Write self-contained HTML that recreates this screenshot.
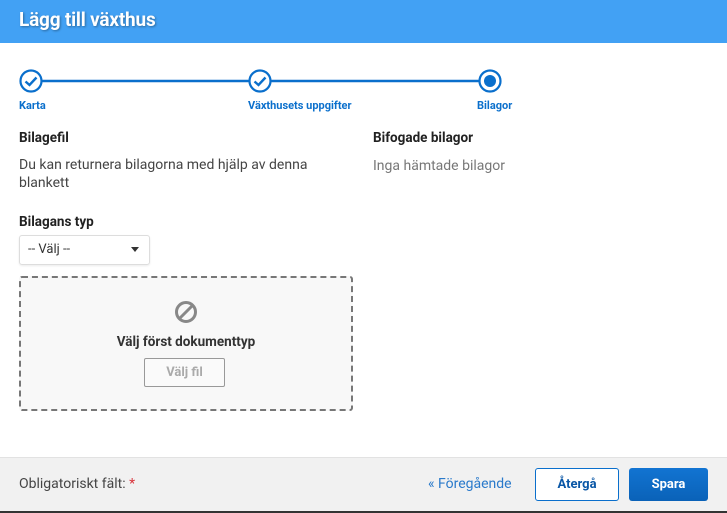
<!DOCTYPE html>
<html><head><meta charset="utf-8"><style>
*{margin:0;padding:0;box-sizing:border-box}
body{width:727px;height:513px;overflow:hidden;background:#fff;font-family:"Roboto","Liberation Sans",sans-serif;position:relative;color:#222}
.a{position:absolute;white-space:nowrap}
.hdr{position:absolute;left:0;top:0;width:727px;height:43px;background:#42a1f4}
.hdr span{position:absolute;left:19px;top:8px;font-size:19px;font-weight:bold;color:#fff;text-shadow:1px 1px 2px rgba(0,0,0,.35);letter-spacing:-0.2px}
.lbl{font-size:11px;font-weight:bold;color:#0a6fcc;top:99px}
.h{font-size:13.5px;font-weight:bold;color:#222}
.p{font-size:14px;color:#444;line-height:18px}
.sel{left:19px;top:235px;width:131px;height:30px;border:1px solid #ddd;border-radius:3px;box-shadow:0 1px 2px rgba(0,0,0,.08);font-size:13px;color:#333;padding:6px 0 0 8px}
.drop{left:19px;top:276px;width:334px;height:135px;background:#f8f8f8;border:2px dashed #777;border-radius:3px}
.btnf{left:144px;top:358px;width:81px;height:29px;border:1px solid #999;border-radius:2px;font-size:13px;font-weight:bold;color:#aaa;text-align:center;line-height:27px;background:#fafafa}
.ftr{position:absolute;left:0;top:457px;width:727px;height:54px;background:#f1f1f1;border-top:1px solid #e2e2e2}
</style></head><body>
<div class="hdr"><span>Lägg till växthus</span></div>
<svg class="a" style="left:0;top:60px" width="727" height="40">
<line x1="42" y1="21" x2="249" y2="21" stroke="#0a6fcc" stroke-width="2.5"/>
<line x1="271" y1="21" x2="479" y2="21" stroke="#0a6fcc" stroke-width="2.5"/>
<circle cx="31" cy="21" r="10.5" fill="#fff" stroke="#0a6fcc" stroke-width="2.2"/>
<path d="M25.5 21.5 L29.5 25 L36.5 17.5" fill="none" stroke="#0a6fcc" stroke-width="2.4"/>
<circle cx="260" cy="21" r="10.5" fill="#fff" stroke="#0a6fcc" stroke-width="2.2"/>
<path d="M254.5 21.5 L258.5 25 L265.5 17.5" fill="none" stroke="#0a6fcc" stroke-width="2.4"/>
<circle cx="490" cy="21" r="10.5" fill="#fff" stroke="#0a6fcc" stroke-width="2.2"/>
<circle cx="490" cy="21" r="6" fill="#0a6fcc"/>
</svg>
<div class="a lbl" style="left:19px">Karta</div>
<div class="a lbl" style="left:248px">Växthusets uppgifter</div>
<div class="a lbl" style="left:477px">Bilagor</div>
<div class="a h" style="left:19px;top:130px">Bilagefil</div>
<div class="a h" style="left:373px;top:130px">Bifogade bilagor</div>
<div class="a p" style="left:19px;top:156px">Du kan returnera bilagorna med hjälp av denna<br>blankett</div>
<div class="a p" style="left:373px;top:157px;color:#777">Inga hämtade bilagor</div>
<div class="a h" style="left:19px;top:214px">Bilagans typ</div>
<div class="a sel">-- Välj --<span style="position:absolute;right:10px;top:11px;width:0;height:0;border-left:4.5px solid transparent;border-right:4.5px solid transparent;border-top:5px solid #333"></span></div>
<div class="a drop"></div>
<svg class="a" style="left:174px;top:300px" width="24" height="24"><circle cx="12" cy="12" r="9.5" fill="none" stroke="#888" stroke-width="3"/><line x1="5.5" y1="18.5" x2="18.5" y2="5.5" stroke="#888" stroke-width="3"/></svg>
<div class="a" style="left:19px;top:334px;width:334px;text-align:center;font-size:13.5px;font-weight:bold;color:#333">Välj först dokumenttyp</div>
<div class="a btnf">Välj fil</div>
<div class="ftr"></div>
<div class="a" style="left:0;top:511px;width:727px;height:2px;background:#333"></div>
<div class="a" style="left:19px;top:476px;font-size:14px;color:#444">Obligatoriskt fält: <span style="color:#d9363e">*</span></div>
<div class="a" style="left:428px;top:476px;font-size:14px;color:#2a7acb">« Föregående</div>
<div class="a" style="left:535px;top:468px;width:84px;height:33px;border:1px solid #0a6fcc;border-radius:3px;background:#fff;color:#0a57a6;font-size:13px;font-weight:bold;text-align:center;line-height:31px">Återgå</div>
<div class="a" style="left:629px;top:468px;width:79px;height:33px;border-radius:3px;background:linear-gradient(#1274d2,#0a62b8);color:#fff;font-size:13px;font-weight:bold;text-align:center;line-height:33px">Spara</div>
</body></html>
